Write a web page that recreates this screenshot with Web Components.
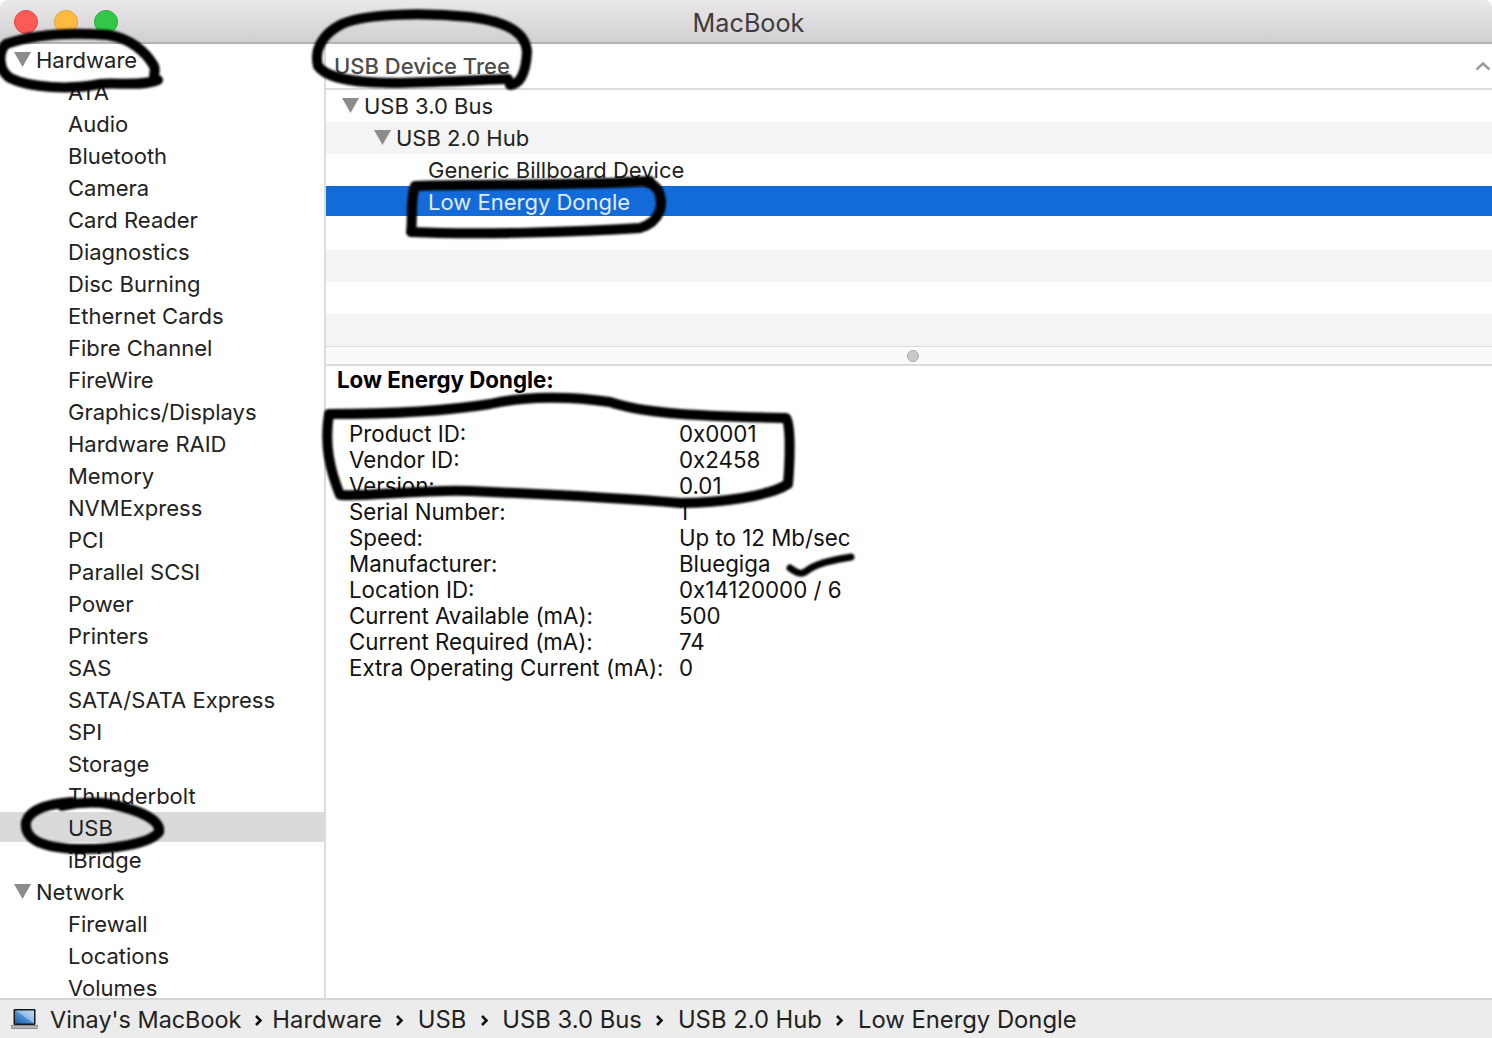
<!DOCTYPE html>
<html>
<head>
<meta charset="utf-8">
<title>MacBook</title>
<style>
  html, body { margin: 0; padding: 0; background: #fff; overflow: hidden; }
  body { font-family: Inter, "Liberation Sans", sans-serif; font-size: 22px; color: #222; }
</style>
</head>
<body>
<app-window>
  <title-bar slot="title">MacBook</title-bar>
  <side-bar slot="side">
    <tree-row arrow>Hardware</tree-row>
    <tree-row level="1">ATA</tree-row>
    <tree-row level="1">Audio</tree-row>
    <tree-row level="1">Bluetooth</tree-row>
    <tree-row level="1">Camera</tree-row>
    <tree-row level="1">Card Reader</tree-row>
    <tree-row level="1">Diagnostics</tree-row>
    <tree-row level="1">Disc Burning</tree-row>
    <tree-row level="1">Ethernet Cards</tree-row>
    <tree-row level="1">Fibre Channel</tree-row>
    <tree-row level="1">FireWire</tree-row>
    <tree-row level="1">Graphics/Displays</tree-row>
    <tree-row level="1">Hardware RAID</tree-row>
    <tree-row level="1">Memory</tree-row>
    <tree-row level="1">NVMExpress</tree-row>
    <tree-row level="1">PCI</tree-row>
    <tree-row level="1">Parallel SCSI</tree-row>
    <tree-row level="1">Power</tree-row>
    <tree-row level="1">Printers</tree-row>
    <tree-row level="1">SAS</tree-row>
    <tree-row level="1">SATA/SATA Express</tree-row>
    <tree-row level="1">SPI</tree-row>
    <tree-row level="1">Storage</tree-row>
    <tree-row level="1">Thunderbolt</tree-row>
    <tree-row level="1" current>USB</tree-row>
    <tree-row level="1">iBridge</tree-row>
    <tree-row arrow>Network</tree-row>
    <tree-row level="1">Firewall</tree-row>
    <tree-row level="1">Locations</tree-row>
    <tree-row level="1">Volumes</tree-row>
  </side-bar>
  <device-tree slot="main">
    <tree-row arrow>USB 3.0 Bus</tree-row>
    <tree-row arrow level="1" striped>USB 2.0 Hub</tree-row>
    <tree-row level="2">Generic Billboard Device</tree-row>
    <tree-row level="2" selected>Low Energy Dongle</tree-row>
    <tree-row></tree-row>
    <tree-row striped></tree-row>
    <tree-row></tree-row>
    <tree-row striped></tree-row>
  </device-tree>
  <detail-pane slot="main" heading="Low Energy Dongle:">
    <detail-row label="Product ID:">0x0001</detail-row>
    <detail-row label="Vendor ID:">0x2458</detail-row>
    <detail-row label="Version:">0.01</detail-row>
    <detail-row label="Serial Number:">1</detail-row>
    <detail-row label="Speed:">Up to 12 Mb/sec</detail-row>
    <detail-row label="Manufacturer:">Bluegiga</detail-row>
    <detail-row label="Location ID:">0x14120000 / 6</detail-row>
    <detail-row label="Current Available (mA):">500</detail-row>
    <detail-row label="Current Required (mA):">74</detail-row>
    <detail-row label="Extra Operating Current (mA):">0</detail-row>
  </detail-pane>
  <path-bar slot="path">
    <span>Vinay's MacBook</span>
    <span>Hardware</span>
    <span>USB</span>
    <span>USB 3.0 Bus</span>
    <span>USB 2.0 Hub</span>
    <span>Low Energy Dongle</span>
  </path-bar>
  <marker-layer slot="marks"></marker-layer>
</app-window>

<script>
class AppWindow extends HTMLElement {
    constructor() {
        super();
        this.attachShadow({ mode: "open" });
    }
    connectedCallback() {
        this.shadowRoot.innerHTML = `
            <style>
                :host { display: flex; flex-direction: column; position: relative; width: 1492px; height: 1038px; overflow: hidden; }
                .body { display: flex; flex: 1; min-height: 0; }
                .main { display: flex; flex-direction: column; flex: 1; min-width: 0; }
            </style>
            <slot name="title"></slot>
            <div class="body">
                <slot name="side"></slot>
                <div class="main"><slot name="main"></slot></div>
            </div>
            <slot name="path"></slot>
            <slot name="marks"></slot>
        `;
    }
}

class TitleBar extends HTMLElement {
    constructor() {
        super();
        this.attachShadow({ mode: "open" });
    }
    connectedCallback() {
        this.shadowRoot.innerHTML = `
            <style>
                :host { display: flex; align-items: center; justify-content: center; position: relative; height: 44px; box-sizing: border-box;
                    padding-top: 3px; background: linear-gradient(#eae8ea, #d1cfd1); border-bottom: 2px solid #b4b2b4; border-radius: 8px 8px 0 0;
                    color: #3d3b3d; font-size: 25.2px; flex: none; }
                .lights { position: absolute; left: 14px; top: 10px; display: flex; gap: 16px; }
                .lights i { width: 24px; height: 24px; border-radius: 50%; box-sizing: border-box; }
                .r { background: #fc5a55; border: 1px solid #e5483f; }
                .y { background: #fdbb3f; border: 1px solid #e5a52f; }
                .g { background: #33c748; border: 1px solid #27ac39; }
                .t { margin-left: 5px; }
            </style>
            <div class="lights"><i class="r"></i><i class="y"></i><i class="g"></i></div>
            <span class="t"><slot></slot></span>
        `;
    }
}

class SideBar extends HTMLElement {
    constructor() {
        super();
        this.attachShadow({ mode: "open" });
    }
    connectedCallback() {
        this.shadowRoot.innerHTML = `
            <style>
                :host { display: block; width: 326px; flex: none; box-sizing: border-box; border-right: 2px solid #dcdcdc; overflow: hidden; --base: 36px; }
            </style>
            <slot></slot>
        `;
    }
}

class TreeRow extends HTMLElement {
    constructor() {
        super();
        this.attachShadow({ mode: "open" });
    }
    connectedCallback() {
        const level = Number(this.getAttribute("level") || 0);
        this.style.setProperty("--level", level);
        this.shadowRoot.innerHTML = `
            <style>
                :host { display: flex; align-items: center; position: relative; height: 32px; box-sizing: border-box;
                    padding-left: calc(var(--base) + var(--level) * 32px); white-space: nowrap; }
                :host([striped]) { background: #f4f4f4; }
                :host([current]) { background: #dadada; height: 30px; margin-bottom: 2px; padding-top: 2px; }
                :host([selected]) { background: #126bd9; color: #e2ebf9; height: 30px; margin-bottom: 2px; padding-top: 2px; }
                svg { position: absolute; left: calc(var(--base) - 22px + var(--level) * 32px); top: 8px; }
            </style>
            ${this.hasAttribute("arrow") ? '<svg width="17" height="15" viewBox="0 0 17 15"><path d="M0 0H17L8.5 15Z" fill="#8c8c8c"/></svg>' : ""}
            <slot></slot>
        `;
    }
}

class DeviceTree extends HTMLElement {
    constructor() {
        super();
        this.attachShadow({ mode: "open" });
    }
    connectedCallback() {
        this.shadowRoot.innerHTML = `
            <style>
                :host { display: block; flex: none; --base: 38px; }
                .head { display: flex; align-items: center; justify-content: space-between; height: 46px; box-sizing: border-box;
                    padding: 0 0 1px 8px; border-bottom: 2px solid #dcdcdc; font-weight: 500; color: #4c4c4c; }
                .head svg { margin-right: 1px; }
                .split { display: flex; align-items: center; justify-content: center; height: 20px; box-sizing: border-box; padding-left: 7px;
                    background: #fafafa; border-top: 1px solid #dcdcdc; border-bottom: 2px solid #dcdcdc; }
                .split i { width: 12px; height: 12px; border-radius: 50%; background: #c9c9c9; border: 1px solid #aaa; box-sizing: border-box; }
            </style>
            <div class="head">
                <span>USB Device Tree</span>
                <svg width="16" height="10" viewBox="0 0 16 10"><path d="M1.5 8.5L8 2.5L14.5 8.5" fill="none" stroke="#9a9a9a" stroke-width="2.4"/></svg>
            </div>
            <slot></slot>
            <div class="split"><i></i></div>
        `;
    }
}

class DetailPane extends HTMLElement {
    constructor() {
        super();
        this.attachShadow({ mode: "open" });
    }
    connectedCallback() {
        this.shadowRoot.innerHTML = `
            <style>
                :host { display: block; flex: 1; padding: 0 0 0 11px; color: #111; font-size: 22.3px; }
                h2 { margin: 0 0 27px; font-size: inherit; font-weight: 700; line-height: 28px; color: #000; }
                .rows { display: flex; flex-direction: column; padding-left: 12px; }
            </style>
            <h2>${this.getAttribute("heading")}</h2>
            <div class="rows"><slot></slot></div>
        `;
    }
}

class DetailRow extends HTMLElement {
    constructor() {
        super();
        this.attachShadow({ mode: "open" });
    }
    connectedCallback() {
        this.shadowRoot.innerHTML = `
            <style>
                :host { display: grid; grid-template-columns: 330px auto; height: 26px; line-height: 26px; white-space: nowrap; }
            </style>
            <span>${this.getAttribute("label")}</span>
            <span><slot></slot></span>
        `;
    }
}

class PathBar extends HTMLElement {
    constructor() {
        super();
        this.attachShadow({ mode: "open" });
    }
    connectedCallback() {
        // chevrons go between the slotted crumbs
        const crumbs = [...this.querySelectorAll("span")];
        crumbs.forEach((c, i) => { c.slot = "c" + i; });
        const chevron = '<svg width="9" height="13" viewBox="0 0 9 13"><path d="M2 2L6.5 6.5L2 11" fill="none" stroke="#111" stroke-width="2.6"/></svg>';
        this.shadowRoot.innerHTML = `
            <style>
                :host { display: flex; align-items: center; height: 40px; flex: none; box-sizing: border-box; padding-left: 11px;
                    background: #ececec; border-top: 2px solid #d5d5d5; font-size: 23.4px; color: #222; white-space: nowrap; }
                ::slotted(span) { font-size: 23.8px; }
                ::slotted([slot="c0"]) { font-size: 23.4px; }
                .mac { margin-right: 12px; flex: none; }
                .sep { display: flex; justify-content: center; width: 36px; margin-top: 3px; }
                .sep.first { width: 31px; padding-left: 4px; box-sizing: border-box; }
            </style>
            <svg class="mac" width="27" height="20" viewBox="0 0 27 20">
                <defs><linearGradient id="scr" x1="0" y1="1" x2="1" y2="0"><stop offset="0" stop-color="#1c5cab"/><stop offset=".5" stop-color="#4f90d6"/><stop offset=".52" stop-color="#8fbce6"/><stop offset="1" stop-color="#c4dbf0"/></linearGradient></defs>
                <rect x="2.5" y="0" width="22" height="16" rx="1.2" fill="#16181c"/>
                <rect x="4" y="1.5" width="19" height="13" fill="url(#scr)"/>
                <path d="M0 16.5H27V18Q27 19.5 25 19.5H2Q0 19.5 0 18Z" fill="#b3b5b8" stroke="#6d6f72" stroke-width=".7"/>
            </svg>
            ${crumbs.map((c, i) => `<slot name="c${i}"></slot>` + (i < crumbs.length - 1 ? `<span class="sep${i === 0 ? " first" : ""}">${chevron}</span>` : "")).join("")}
        `;
    }
}

class MarkerLayer extends HTMLElement {
    constructor() {
        super();
        this.attachShadow({ mode: "open" });
    }
    connectedCallback() {
        // pen scribbles drawn on top of the screenshot
        this.shadowRoot.innerHTML = `
            <style>
                :host { position: absolute; inset: 0; pointer-events: none; display: block; }
                svg { display: block; }
                path { fill: none; stroke: #000; stroke-width: 10; stroke-linecap: round; stroke-linejoin: round; filter: blur(.8px); }
            </style>
            <svg width="1492" height="1038" viewBox="0 0 1492 1038">
                <path d="M6 44C35 34 70 32 108 35C130 38 146 52 154 66C157 74 150 78 158 80C140 87 115 82 100 84C70 90 30 88 10 78C-2 70 -2 52 6 44Z"/>
                <path d="M510 85C522 84 526 70 527 52C526 34 510 22 470 17C420 12 365 14 342 24C322 34 314 50 318 66C328 80 360 83 400 83C440 82 480 80 508 79"/>
                <path d="M650 181C600 185 480 184 415 186C410 200 413 218 411 232C480 235 580 232 640 228C660 222 665 205 658 190C653 183 648 180 625 182"/>
                <path d="M329 414C380 414 440 412 490 404C525 396 570 396 610 402C640 412 680 416 786 418C791 425 790 460 788 484C770 496 720 503 680 503C620 498 540 494 470 491C420 489 370 497 340 495C330 470 324 445 329 414Z"/>
                <path d="M790 568C796 572 800 575 805 572C818 562 835 560 851 557" style="stroke-width:7"/>
                <path d="M72 802C50 804 30 808 26 822C24 838 38 847 75 849C110 850 150 844 159 832C161 820 140 810 110 804C90 801 75 803 62 806"/>
            </svg>
        `;
    }
}

customElements.define("app-window", AppWindow);
customElements.define("title-bar", TitleBar);
customElements.define("side-bar", SideBar);
customElements.define("tree-row", TreeRow);
customElements.define("device-tree", DeviceTree);
customElements.define("detail-pane", DetailPane);
customElements.define("detail-row", DetailRow);
customElements.define("path-bar", PathBar);
customElements.define("marker-layer", MarkerLayer);
</script>
</body>
</html>
